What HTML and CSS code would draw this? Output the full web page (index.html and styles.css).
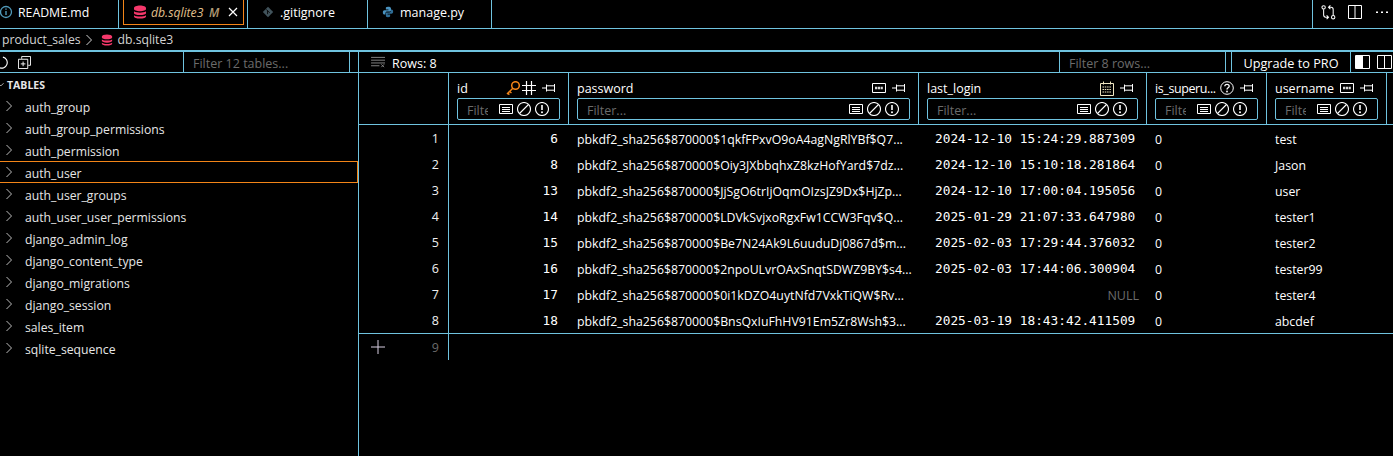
FILE: index.html
```html
<!DOCTYPE html>
<html lang="en">
<head>
<meta charset="utf-8">
<title>db.sqlite3</title>
<link rel="stylesheet" href="styles.css">
</head>
<body>
<svg class="defs" width="0" height="0" aria-hidden="true">
  <symbol id="i-db" viewBox="0 0 14 14"><path fill="currentColor" d="M1 3c0-1.3 2.700-2.400 6-2.400S13 1.700 13 3v1c0 1.300-2.700 2.200-6 2.200S1 5.300 1 4zM1 6.300C2.300 7.300 4.500 7.700 7 7.700s4.700-.4 6-1.400v1.600c0 1.300-2.700 2.200-6 2.200S1 9.200 1 7.900zM1 10.200c1.300 1 3.500 1.400 6 1.400s4.700-.4 6-1.400v1.200c0 1.200-2.700 2.100-6 2.100s-6-.9-6-2.100z"/></symbol>
  <symbol id="i-list" viewBox="0 0 14 14"><path fill="none" stroke="currentColor" d="M.5 2.500h13v9H.5zM3 5.500h8M3 7.500h8M3 9.500h8"/></symbol>
  <symbol id="i-ban" viewBox="0 0 14 14"><circle cx="7" cy="7" r="6.500" fill="none" stroke="currentColor" stroke-width="1.100"/><path stroke="currentColor" stroke-width="1.100" d="M2.500 11.500l9-9"/></symbol>
  <symbol id="i-alert" viewBox="0 0 14 14"><circle cx="7" cy="7" r="6.500" fill="none" stroke="currentColor" stroke-width="1.100"/><path stroke="currentColor" stroke-width="1.600" d="M7 3v5"/><circle cx="7" cy="10.200" r="1" fill="currentColor"/></symbol>
  <symbol id="i-pin" viewBox="0 0 14 14"><path fill="none" stroke="currentColor" d="M0 7h4M4.500 3.500v7M4.500 4.800h8M4.500 9.200h8M12.500 3v8"/></symbol>
  <symbol id="i-abc" viewBox="0 0 14 14"><path fill="none" stroke="currentColor" d="M.5 2.500h13v9H.5z"/><path stroke="#d9d9d9" stroke-width="2.600" stroke-dasharray="2.200 .6" d="M3 7h8"/></symbol>
  <symbol id="i-chev" viewBox="0 0 8 12"><path fill="none" stroke="currentColor" d="M1.500 1l5 5-5 5"/></symbol>
</svg>

<header class="tabs">
  <div class="tab tab-first">
    <svg class="tab-icon info" viewBox="0 0 14 14"><circle cx="6" cy="7" r="5.500" fill="none" stroke="currentColor" stroke-width="1.300"/><path stroke="currentColor" stroke-width="1.400" d="M6 6v4M6 3.500v1.300"/></svg>
    <span>README.md</span>
  </div>
  <div class="tab tab-active">
    <div class="active-box">
      <svg class="tab-icon db"><use href="#i-db"/></svg>
      <span class="active-name">db.sqlite3</span>
      <span class="active-m">M</span>
      <svg class="close" viewBox="0 0 10 10"><path stroke="currentColor" stroke-width="1.200" d="M1 1l8 8M9 1l-8 8"/></svg>
    </div>
  </div>
  <div class="tab tab-git">
    <svg class="tab-icon git" viewBox="0 0 14 14"><path fill="currentColor" d="M7 1l6 6-6 6-6-6z"/><path stroke="#000" d="M5 4l4 4M6.500 5.500v4"/></svg>
    <span>.gitignore</span>
  </div>
  <div class="tab tab-py">
    <svg class="tab-icon py" viewBox="0 0 14 14"><path fill="currentColor" d="M7 1C4.500 1 4.500 2 4.500 3v1.200H7.500V5H3C1.500 5 1 6 1 7.500S1.700 10 3 10h1V8.500C4 7.300 5 6.500 6 6.500h3c.9 0 1.500-.6 1.500-1.500V3C10.500 1.800 9.300 1 7 1z"/><path fill="#2f6d96" d="M7 13c2.500 0 2.500-1 2.500-2V9.800H6.500V9H11c1.500 0 2-1 2-2.500S12.300 4 11 4h-.5v1.500c0 1.200-1 2-2 2H5.500c-.9 0-1 .6-1 1.500v2c0 1.200 .2 2 2.500 2z"/></svg>
    <span>manage.py</span>
  </div>
  <div class="tab-fill"></div>
  <div class="tab-actions">
    <svg class="act act-git" viewBox="0 0 16 16"><g fill="none" stroke="currentColor" stroke-width="1.100"><circle cx="2.800" cy="2.500" r="1.800"/><circle cx="13" cy="13" r="1.800"/><path d="M2.800 4.500v6c0 1.500.8 2.500 2.200 2.500h3M6 11l2 2-2 2M13 11V5c0-1.500-.8-2.500-2.200-2.500H8M10 .5l-2 2 2 2"/></g></svg>
    <svg class="act" viewBox="0 0 14 14"><path fill="none" stroke="currentColor" d="M.5 .5h13v13H.5zM7 .5v13"/></svg>
    <svg class="act dots" viewBox="0 0 14 14"><path fill="currentColor" d="M1 6.500h2v1.500H1zM6 6.500h2v1.500H6zM11 6.500h2v1.500h-2z"/></svg>
  </div>
</header>

<nav class="crumbs">
  <span>product_sales</span>
  <svg class="crumb-chev"><use href="#i-chev"/></svg>
  <svg class="crumb-db"><use href="#i-db"/></svg>
  <span>db.sqlite3</span>
</nav>

<div class="toolbar">
  <div class="tool-left">
    <div class="tool-icons">
      <svg class="refresh" viewBox="0 0 14 14"><path fill="none" stroke="currentColor" stroke-width="1.200" d="M8.500 1.200A6 6 0 1 1 2 4"/></svg>
      <svg class="collapse" viewBox="0 0 14 14"><path fill="none" stroke="currentColor" d="M4 3V.5h9.500V10H11M.5 3.500h10v10H.5zM3 8.500h5M5.500 6v5"/></svg>
    </div>
    <input class="filter-tables" placeholder="Filter 12 tables...">
  </div>
  <div class="tool-right">
    <svg class="rows-icon" viewBox="0 0 16 14"><path fill="none" stroke="#8a8a8a" d="M0 1.500h15M0 4.500h15M0 7.500h15M0 10.500h9M11 9l3 3M14 9l-3 3"/></svg>
    <span class="rows-count">Rows: 8</span>
    <div class="tool-spring"></div>
    <input class="filter-rows" placeholder="Filter 8 rows...">
    <div class="upgrade">Upgrade to PRO</div>
    <div class="view-btns">
      <svg class="view" viewBox="0 0 15 14"><path fill="currentColor" d="M1 1h7v12H1z"/><path fill="none" stroke="currentColor" d="M.5.500h14v13H.5z"/></svg>
      <svg class="view" viewBox="0 0 15 14"><path fill="none" stroke="currentColor" d="M.5.500h14v13H.5zM7.500.5v13"/></svg>
    </div>
  </div>
</div>

<main class="main">
  <aside class="side">
    <div class="side-title">
      <svg class="side-caret" viewBox="0 0 8 8"><path fill="none" stroke="currentColor" d="M-2 2l3 3 3-3"/></svg>
      <span>TABLES</span>
    </div>
    <ul class="side-list">
      <li class="side-item"><svg class="side-chev"><use href="#i-chev"/></svg>auth_group</li>
      <li class="side-item"><svg class="side-chev"><use href="#i-chev"/></svg>auth_group_permissions</li>
      <li class="side-item"><svg class="side-chev"><use href="#i-chev"/></svg>auth_permission</li>
      <li class="side-item selected"><svg class="side-chev"><use href="#i-chev"/></svg>auth_user</li>
      <li class="side-item"><svg class="side-chev"><use href="#i-chev"/></svg>auth_user_groups</li>
      <li class="side-item"><svg class="side-chev"><use href="#i-chev"/></svg>auth_user_user_permissions</li>
      <li class="side-item"><svg class="side-chev"><use href="#i-chev"/></svg>django_admin_log</li>
      <li class="side-item"><svg class="side-chev"><use href="#i-chev"/></svg>django_content_type</li>
      <li class="side-item"><svg class="side-chev"><use href="#i-chev"/></svg>django_migrations</li>
      <li class="side-item"><svg class="side-chev"><use href="#i-chev"/></svg>django_session</li>
      <li class="side-item"><svg class="side-chev"><use href="#i-chev"/></svg>sales_item</li>
      <li class="side-item"><svg class="side-chev"><use href="#i-chev"/></svg>sqlite_sequence</li>
    </ul>
  </aside>

  <section class="grid">
    <div class="grid-head">
      <div class="hcell hrow"></div>

      <div class="hcell">
        <div class="hname"><span class="hlabel">id</span>
          <svg class="hic key" viewBox="0 0 14 14"><g fill="none" stroke="currentColor" stroke-width="1.500"><circle cx="9.500" cy="4.500" r="3.800"/><path d="M6.800 7.200L1 13M1.500 12.500l2 1M3.500 10.500l2 1.500"/></g></svg>
          <svg class="hic" viewBox="0 0 14 14"><path stroke="currentColor" stroke-width="1.200" d="M4.500 0v14M9.500 0v14M0 4.500h14M0 9.500h14"/></svg>
          <svg class="hic pin"><use href="#i-pin"/></svg>
        </div>
        <div class="hfilter"><input class="hinput" placeholder="Filter..."><svg class="fic"><use href="#i-list"/></svg><svg class="fic"><use href="#i-ban"/></svg><svg class="fic"><use href="#i-alert"/></svg></div>
      </div>

      <div class="hcell">
        <div class="hname"><span class="hlabel">password</span>
          <svg class="hic"><use href="#i-abc"/></svg>
          <svg class="hic pin"><use href="#i-pin"/></svg>
        </div>
        <div class="hfilter"><input class="hinput" placeholder="Filter..."><svg class="fic"><use href="#i-list"/></svg><svg class="fic"><use href="#i-ban"/></svg><svg class="fic"><use href="#i-alert"/></svg></div>
      </div>

      <div class="hcell">
        <div class="hname"><span class="hlabel">last_login</span>
          <svg class="hic cal" viewBox="0 0 14 15"><path fill="none" stroke="currentColor" d="M.5 2.500h13v12H.5zM3.500 .5v3M10.500 .5v3"/><path stroke="currentColor" stroke-dasharray="1.500 .8" stroke-width="1.200" d="M2.500 6h9M2.500 8.500h9M2.500 11h9"/></svg>
          <svg class="hic pin"><use href="#i-pin"/></svg>
        </div>
        <div class="hfilter"><input class="hinput" placeholder="Filter..."><svg class="fic"><use href="#i-list"/></svg><svg class="fic"><use href="#i-ban"/></svg><svg class="fic"><use href="#i-alert"/></svg></div>
      </div>

      <div class="hcell">
        <div class="hname"><span class="hlabel hlabel-tight">is_superu...</span>
          <svg class="hic" viewBox="0 0 14 14"><circle cx="7" cy="7" r="6.300" fill="none" stroke="currentColor"/><path fill="none" stroke="currentColor" stroke-width="1.300" d="M4.800 5.300C4.800 3.900 6 3.300 7 3.300s2.200.7 2.200 1.900C9.200 6.800 7 6.800 7 8.500"/><circle cx="7" cy="10.500" r=".9" fill="currentColor"/></svg>
          <svg class="hic pin"><use href="#i-pin"/></svg>
        </div>
        <div class="hfilter"><input class="hinput" placeholder="Filter..."><svg class="fic"><use href="#i-list"/></svg><svg class="fic"><use href="#i-ban"/></svg><svg class="fic"><use href="#i-alert"/></svg></div>
      </div>

      <div class="hcell">
        <div class="hname"><span class="hlabel">username</span>
          <svg class="hic"><use href="#i-abc"/></svg>
          <svg class="hic pin"><use href="#i-pin"/></svg>
        </div>
        <div class="hfilter"><input class="hinput" placeholder="Filter..."><svg class="fic"><use href="#i-list"/></svg><svg class="fic"><use href="#i-ban"/></svg><svg class="fic"><use href="#i-alert"/></svg></div>
      </div>
    </div>

    <div class="grid-body">
      <div class="row"><div class="c-num">1</div><div class="c-id">6</div><div class="c-txt">pbkdf2_sha256$870000$1qkfFPxvO9oA4agNgRlYBf$Q7...</div><div class="c-date">2024-12-10 15:24:29.887309</div><div class="c-txt">0</div><div class="c-txt">test</div></div>
      <div class="row"><div class="c-num">2</div><div class="c-id">8</div><div class="c-txt">pbkdf2_sha256$870000$Oiy3JXbbqhxZ8kzHofYard$7dz...</div><div class="c-date">2024-12-10 15:10:18.281864</div><div class="c-txt">0</div><div class="c-txt">Jason</div></div>
      <div class="row"><div class="c-num">3</div><div class="c-id">13</div><div class="c-txt">pbkdf2_sha256$870000$JjSgO6trIjOqmOIzsJZ9Dx$HjZp...</div><div class="c-date">2024-12-10 17:00:04.195056</div><div class="c-txt">0</div><div class="c-txt">user</div></div>
      <div class="row"><div class="c-num">4</div><div class="c-id">14</div><div class="c-txt">pbkdf2_sha256$870000$LDVkSvjxoRgxFw1CCW3Fqv$Q...</div><div class="c-date">2025-01-29 21:07:33.647980</div><div class="c-txt">0</div><div class="c-txt">tester1</div></div>
      <div class="row"><div class="c-num">5</div><div class="c-id">15</div><div class="c-txt">pbkdf2_sha256$870000$Be7N24Ak9L6uuduDj0867d$m...</div><div class="c-date">2025-02-03 17:29:44.376032</div><div class="c-txt">0</div><div class="c-txt">tester2</div></div>
      <div class="row"><div class="c-num">6</div><div class="c-id">16</div><div class="c-txt">pbkdf2_sha256$870000$2npoULvrOAxSnqtSDWZ9BY$s4...</div><div class="c-date">2025-02-03 17:44:06.300904</div><div class="c-txt">0</div><div class="c-txt">tester99</div></div>
      <div class="row"><div class="c-num">7</div><div class="c-id">17</div><div class="c-txt">pbkdf2_sha256$870000$0i1kDZO4uytNfd7VxkTiQW$Rv...</div><div class="c-null">NULL</div><div class="c-txt">0</div><div class="c-txt">tester4</div></div>
      <div class="row"><div class="c-num">8</div><div class="c-id">18</div><div class="c-txt">pbkdf2_sha256$870000$BnsQxIuFhHV91Em5Zr8Wsh$3...</div><div class="c-date">2025-03-19 18:43:42.411509</div><div class="c-txt">0</div><div class="c-txt">abcdef</div></div>
    </div>

    <div class="new-row">
      <div class="new-num"><svg class="plus" viewBox="0 0 14 14"><path stroke="currentColor" d="M7 0v14M0 7h14"/></svg><span>9</span></div>
    </div>
  </section>
</main>
</body>
</html>
```

FILE: styles.css
```css
* { box-sizing: border-box; }
html, body { margin: 0; height: 456px; overflow: hidden; }
body {
  background: #000;
  color: #fff;
  font-family: "Open Sans", "Noto Sans", sans-serif;
  font-size: 12.5px;
  display: flex;
  flex-direction: column;
  --line: #6fc3df;
}
.defs { position: absolute; }
input {
  background: transparent;
  border: 0;
  outline: 0;
  color: #fff;
  font: inherit;
  min-width: 0;
}
input::placeholder { color: #6b6b6b; opacity: 1; }

/* tabs */
.tabs { display: flex; height: 29px; border-bottom: 1px solid var(--line); flex: none; }
.tab { display: flex; align-items: center; border-right: 1px solid var(--line); height: 28px; padding-bottom: 4px; }
.tab-first { width: 119px; gap: 4px; font-size: 12.300px; }
.tab-active { width: 129px; padding: 0 3px 0 4px; align-items: flex-start; }
.tab-git { width: 120px; padding-left: 14px; gap: 6px; }
.tab-py { width: 124px; padding-left: 14px; gap: 6px; }
.tab-icon { width: 14px; height: 14px; flex: none; }
.info { color: #519aba; }
.db { color: #f5386b; }
.git { color: #41535b; width: 12px; height: 12px; }
.py { color: #4a93c0; width: 12px; height: 12px; }
.active-box {
  width: 121px; height: 25px;
  border: 1px solid #f38518;
  border-top: 0;
  display: flex; align-items: center;
  padding: 0 5px 0 9px;
}
.active-name { font-style: italic; color: #e2c08d; margin-left: 4px; width: 58px; font-size: 12.200px; }
.active-m { font-style: italic; font-weight: 600; color: #b09a75; width: 19px; font-size: 12px; }
.close { width: 10px; height: 10px; color: #fff; }
.tab-fill { flex: 1; }
.tab-actions {
  width: 81px; height: 28px;
  border-left: 1px solid var(--line);
  display: flex; align-items: center; gap: 12px;
  padding: 0 0 4px 8px;
}
.act { width: 14px; height: 14px; color: #fff; flex: none; }
.act-git { width: 15px; height: 15px; }
.dots { margin-left: 1px; }

/* breadcrumbs */
.crumbs {
  height: 23px; flex: none;
  border-bottom: 2px solid var(--line);
  display: flex; align-items: center;
  padding-left: 2px;
  color: #d4d4d4;
  font-size: 12.200px;
}
.crumb-chev { width: 8px; height: 12px; margin-left: 4px; color: #d4d4d4; }
.crumb-db { width: 12px; height: 12px; margin-left: 8px; margin-right: 5px; color: #f5386b; }

/* toolbar */
.toolbar { height: 21px; flex: none; display: flex; border-bottom: 1px solid var(--line); }
.tool-left { width: 359px; flex: none; display: flex; border-right: 1px solid var(--line); padding-right: 8px; }
.tool-icons { width: 183px; display: flex; align-items: center; gap: 10px; margin-left: -5px; flex: none; }
.refresh { width: 13px; height: 13px; }
.collapse { width: 13px; height: 13px; }
.filter-tables { flex: 1; padding: 2px 0 0 9px; border-left: 1px solid var(--line); border-right: 1px solid var(--line); margin-left: 5px; height: 20px; }
.tool-right { flex: 1; display: flex; align-items: center; padding-left: 12px; }
.rows-icon { width: 15px; height: 13px; flex: none; }
.rows-count { margin-left: 6px; padding-top: 2px; }
.tool-spring { flex: 1; }
.filter-rows { width: 167px; height: 20px; padding: 2px 0 0 9px; border-left: 1px solid var(--line); border-right: 1px solid var(--line); margin-right: 5px; }
.upgrade { width: 120px; height: 20px; padding-top: 2px; font-size: 12.700px; border-left: 1px solid var(--line); border-right: 1px solid var(--line); display: flex; align-items: center; justify-content: center; }
.view-btns { display: flex; align-items: center; gap: 7px; width: 42px; padding-left: 4px; }
.view { width: 15px; height: 14px; color: #fff; flex: none; }

/* main */
.main { flex: 1; display: flex; min-height: 0; }
.side { width: 359px; flex: none; border-right: 1px solid var(--line); }
.side-title { height: 22px; display: flex; align-items: center; padding-top: 2px; font-size: 10.500px; font-weight: 700; color: #e6e6e6; }
.side-caret { width: 7px; height: 8px; color: #ccc; flex: none; }
.side-list { list-style: none; margin: 0; padding: 0; }
.side-item { height: 22px; padding-top: 3px; display: flex; align-items: center; color: #e6e6e6; font-size: 12.200px; border: 1px solid transparent; border-left: 0; }
.side-item.selected { border-color: #f38518; width: 358px; }
.side-chev { width: 8px; height: 12px; margin: -4px 12px 0 5px; color: #bdbdbd; flex: none; }

/* grid */
.grid { flex: 1; min-width: 0; display: flex; flex-direction: column; }
.grid-head, .row { display: grid; grid-template-columns: 90px 120px 350px 228px 120px 120px 1fr; }
.grid-head { height: 52px; border-bottom: 1px solid var(--line); flex: none; }
.hcell { border-right: 1px solid var(--line); padding: 6px 8px 4px; min-width: 0; }
.hname { height: 18px; display: flex; align-items: center; margin-bottom: 1px; padding-right: 4px; }
.hlabel { flex: 1; min-width: 0; white-space: nowrap; }
.hlabel-tight { letter-spacing: -0.4px; }
.hic { width: 14px; height: 14px; flex: none; color: #fff; margin-left: 2px; }
.key { color: #f38518; }
.cal { color: #efe6c2; height: 15px; }
.pin { margin-left: 6px; }
.hfilter {
  height: 22px;
  border: 1px solid var(--line);
  border-radius: 2px;
  display: flex; align-items: center; gap: 4px;
  padding: 0 10px 0 9px;
}
.hinput { flex: 1; height: 18px; padding: 2px 0 0; margin-right: 7px; }
.fic { width: 14px; height: 14px; flex: none; color: #fff; }

.grid-body { flex: none; border-bottom: 1px solid var(--line); }
.row { height: 26px; align-items: center; white-space: nowrap; }
.c-num { height: 26px; padding-top: 5px; border-right: 1px solid var(--line); text-align: right; padding-right: 9px; color: #f0f0f0; }
.c-id { text-align: right; padding-right: 11px; font-family: "DejaVu Sans Mono", "Liberation Mono", monospace; font-size: 12.800px; }
.c-txt { padding: 2px 0 0 8px; min-width: 0; font-size: 12.300px; }
.c-date { padding-left: 16px; font-family: "DejaVu Sans Mono", "Liberation Mono", monospace; font-size: 12.800px; }
.c-null { text-align: right; padding: 2px 8px 0 0; color: #6b6b6b; }
.new-row { height: 26px; width: 90px; border-right: 1px solid var(--line); flex: none; }
.new-num { height: 26px; display: flex; align-items: center; justify-content: space-between; padding: 0 9px 0 12px; color: #6b6b6b; }
.plus { width: 14px; height: 14px; color: #d8cfe2; }
```
